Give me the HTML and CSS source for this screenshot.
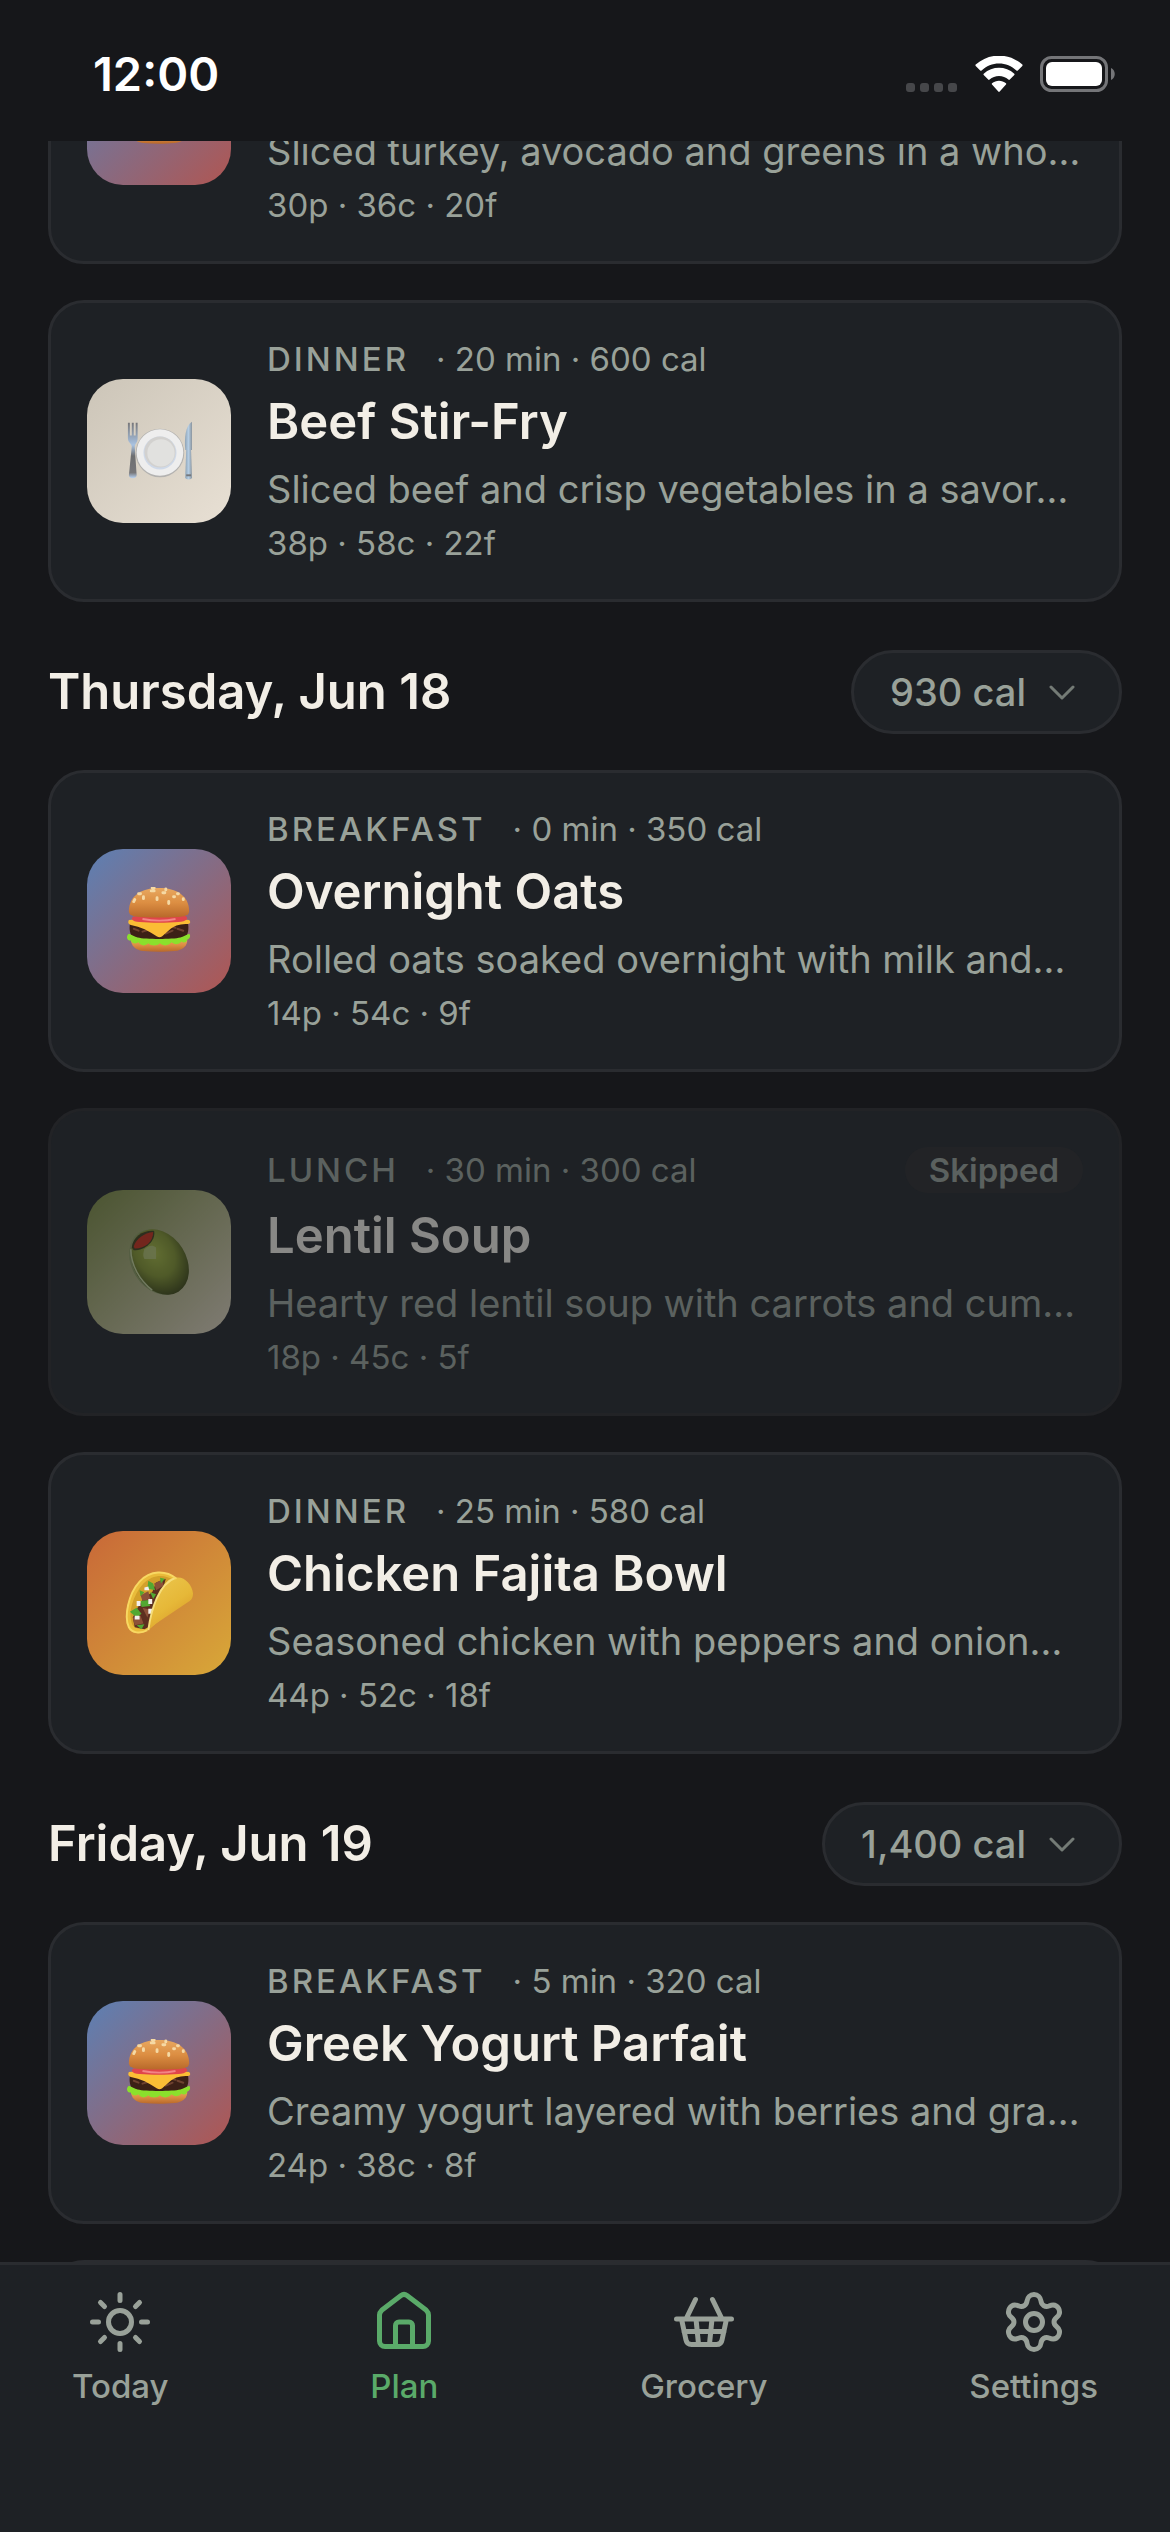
FILE: index.html
```html
<!DOCTYPE html>
<html lang="en">
<head>
  <meta charset="UTF-8">
  <meta name="viewport" content="width=device-width, initial-scale=1.0">
  <title>Meal Plan</title>
  <link rel="stylesheet" href="styles.css">
</head>
<body>
  <!-- shared food drawings -->
  <svg class="sprite" aria-hidden="true">
    <defs>
      <linearGradient id="bun" x1="0" y1="0" x2="0" y2="1">
        <stop offset="0" stop-color="#e8a860"/>
        <stop offset="0.5" stop-color="#dc8e42"/>
        <stop offset="1" stop-color="#b8682a"/>
      </linearGradient>
      <linearGradient id="metal" x1="0" y1="0" x2="0" y2="1">
        <stop offset="0" stop-color="#77777a"/>
        <stop offset="0.4" stop-color="#a9c3e2"/>
        <stop offset="0.6" stop-color="#6d6e70"/>
        <stop offset="0.9" stop-color="#77777a"/>
        <stop offset="1" stop-color="#b9d3f2"/>
      </linearGradient>
      <linearGradient id="blade" x1="0" y1="0" x2="1" y2="0">
        <stop offset="0" stop-color="#8ea3b5"/>
        <stop offset="0.5" stop-color="#b4cde4"/>
        <stop offset="1" stop-color="#8b949c"/>
      </linearGradient>
      <radialGradient id="oliveSkin" cx="0.5" cy="0.35" r="0.65">
        <stop offset="0" stop-color="#a5b83f"/>
        <stop offset="0.55" stop-color="#81932c"/>
        <stop offset="1" stop-color="#3c4612"/>
      </radialGradient>
      <linearGradient id="shell" x1="0" y1="0" x2="0.6" y2="1">
        <stop offset="0" stop-color="#ecc850"/>
        <stop offset="0.6" stop-color="#e6b838"/>
        <stop offset="1" stop-color="#d99a28"/>
      </linearGradient>
    </defs>
    <symbol id="burger" viewBox="0 0 70 70">
      <path d="M6 53h58c1 8-5 12-13 13-10 1-22 1-32 0C11 65 6 61 6 53z" fill="url(#bun)"/>
      <path d="M5 38h60c1 8-1 14-6 15-15 2-33 2-48 0-5-1-7-7-6-15z" fill="#3c2016"/>
      <path d="M9 43l5 2M18 46l6-2M42 48l7-3M54 43l6 2M48 41l4 1" stroke="#6f4230" stroke-width="2" stroke-linecap="round"/>
      <path d="M4 48c3 1 6 3 9 4 8 2 36 2 44 0 3-1 6-3 9-4 2 2 1 5-2 6 0 3-4 4-6 2-2 3-7 4-10 1-3 4-9 4-12 1-3 3-9 3-12 0-3 3-8 3-10-1-3 2-7 1-8-2-3 1-6-4-2-7z" fill="#8be02c"/>
      <path d="M4 34c14-2 46-3 62 0 2 2 1 4-1 4-7 0-13 1-18 5l-9 8c-2 1-3 1-5 0-8-6-17-10-27-12-3-1-3-3-2-5z" fill="#fbbd35"/>
      <path d="M7 33c0-3 3-3 6-3h45c4-1 6 0 6 3-2 2-5 3-9 3-12 1-28 1-40 0-4 0-7-1-8-3z" fill="#e0454b"/>
      <path d="M18 33c11 2 24 2 34 0" stroke="#f28486" stroke-width="2" fill="none"/>
      <path d="M4 25C4 9 17 1 35 1s31 8 31 24c0 3-2 4-5 5-15 2-37 2-52 0-3-1-5-2-5-5z" fill="url(#bun)"/>
      <g stroke="#f5d9a4" stroke-width="3" stroke-linecap="round">
        <path d="M10 13l-1 2M14 7h2M19 10v2M27 4h3M33 11v2M41 6h-2M45 15v2M42 2v1M50 10h1M54 7h1M60 12v1M28 1h2"/>
      </g>
    </symbol>
    <symbol id="plate" viewBox="0 0 70 70">
      <path d="M3 6v16c0 4 3 5 4 8L4 60c0 4 8 4 8 0l-2-30c1-3 3-4 3-8V6h-2v13H9V6H7v13H5V6z" fill="url(#metal)"/>
      <path d="M69 5v29h-7c-1-12 0-25 7-29z" fill="url(#blade)"/>
      <path d="M63 34h5l1 28c0 3-7 3-7 0z" fill="url(#blade)"/>
      <path d="M63 60h5" stroke="#74777b" stroke-width="2"/>
      <circle cx="36" cy="37" r="25" fill="#b3b2b0"/>
      <circle cx="36" cy="36.500" r="24" fill="#eeeeee"/>
      <circle cx="36" cy="37" r="17" fill="#cfd9e8"/>
      <circle cx="36" cy="36" r="16" fill="#d2d1cf"/>
      <circle cx="37" cy="37" r="14" fill="#e1e1df"/>
    </symbol>
    <symbol id="olive" viewBox="0 0 70 70">
      <ellipse cx="34" cy="35" rx="27" ry="36" transform="rotate(-32 34 35)" fill="#8a9a60"/>
      <ellipse cx="36" cy="35" rx="27" ry="36" transform="rotate(-32 36 35)" fill="url(#oliveSkin)"/>
      <path d="M6 22c0 16 9 32 22 42" stroke="#c3d29a" stroke-width="1.500" fill="none"/>
      <path d="M7 20C8 9 19 2 30 3c2 10-9 20-21 20z" fill="#3c3d18"/>
      <path d="M9 19c2-8 11-14 20-15 0 10-8 17-19 17z" fill="#c82c16"/>
      <path d="M20 22c4-4 8-5 12-2v12H20c-2-3-1-7 0-10z" fill="#b9c983" opacity="0.700"/>
    </symbol>
    <symbol id="taco" viewBox="0 0 70 70">
      <path d="M52 10C42 2 26 1 15 13 2 27-2 50 4 60c3 6 12 7 19 3L60 34z" fill="#e9bb3a"/>
      <path d="M49 11C40 5 28 6 19 15 8 27 3 45 7 56c2 5 9 7 15 4z" fill="#d3a02a"/>
      <path d="M42 10l-10 4-4 10-9 6-6 10-5 10 2 10 10 2 8-4 8-26z" fill="#5d2f20"/>
      <path d="M30 15l8-4 2 6-8 5zM16 27l8-4 2 8-8 2zM8 50l8-2 3 8-9 2zM18 40l8 2-3 8z" fill="#8c5138"/>
      <path d="M24 12l5 3 2 7-8-2zM15 22l5 2-4 4zM5 44l7-4 5 6-5 4zM16 33l8-1 2 6-9 1zM36 9l5 1-4 5zM12 58l8-1-3 5zM26 24l6 2-3 5z" fill="#52a832"/>
      <path d="M12 33h4v5h-4zM24 31h4v5h-4zM10 48h5v4h-5zM24 41h4v5h-4zM20 19l4-1 1 4h-5z" fill="#f2efec"/>
      <path d="M24 63C27 41 35 15 52 9c9-2 17 7 18 16 0 4-1 7-5 9L32 56z" fill="url(#shell)"/>
      <path d="M24 63C27 41 35 15 52 9" stroke="#f6de7c" stroke-width="2" fill="none"/>
      <path d="M53 10C42 1 26 1 15 13 3 26-1 50 4 60c3 6 12 7 19 3" stroke="#f8d862" stroke-width="2" fill="none"/>
    </symbol>
    <symbol id="chevron" viewBox="0 0 42 42">
      <path d="M10 16l11 11 11-11" fill="none" stroke="currentColor" stroke-width="3" stroke-linecap="round" stroke-linejoin="round"/>
    </symbol>
  </svg>

  <div class="app">
    <header class="status-bar">
      <time class="clock">12:00</time>
      <div class="status-icons">
        <svg width="52" height="10" viewBox="0 0 52 10" fill="#46474a" aria-label="No signal">
          <rect width="9" height="9" rx="3"/><rect x="14" width="9" height="9" rx="3"/><rect x="28" width="9" height="9" rx="3"/><rect x="42" width="9" height="9" rx="3"/>
        </svg>
        <svg width="50" height="37" viewBox="0 0 50 37" fill="#fff" aria-label="Wi-Fi">
          <path d="M25 7.500c6.500 0 12.700 2.500 17.400 7 .4.400 1 .4 1.400 0l4.500-4.500c.4-.4.4-1 0-1.400C35-3.400 15-3.400 1.700 8.600c-.4.400-.4 1 0 1.400l4.500 4.500c.4.400 1 .4 1.400 0C12.300 10 18.500 7.500 25 7.500z"/>
          <path d="M25 20c3.500 0 6.800 1.300 9.400 3.600.4.400 1 .4 1.400 0l4.500-4.500c.4-.4.4-1 0-1.400-8.700-7.900-21.900-7.900-30.600 0-.4.400-.4 1 0 1.400l4.500 4.500c.4.400 1 .4 1.400 0C18.200 21.300 21.500 20 25 20z"/>
          <path d="M32 28.600c.4-.4.4-1 0-1.400-4-3.400-10-3.400-14 0-.4.400-.4 1 0 1.400l6.300 7c.4.400 1 .4 1.400 0z"/>
        </svg>
        <svg width="76" height="37" viewBox="0 0 76 37" aria-label="Battery full">
          <rect x="1.500" y="1.500" width="65" height="33" rx="10" fill="none" stroke="#747578" stroke-width="3"/>
          <rect x="6" y="6" width="56" height="24" rx="6" fill="#fff"/>
          <path d="M71 12c5 2 5 10 0 12z" fill="#747578"/>
        </svg>
      </div>
    </header>

    <main class="plan">
      <div class="plan-list">
        <article class="meal-card">
          <div class="thumb thumb-burger"><svg><use href="#burger"/></svg></div>
          <div class="meal-info">
            <div class="meal-meta"><span class="meal-type">Lunch</span><span>· 10 min · 450 cal</span></div>
            <h3>Turkey Avocado Wrap</h3>
            <p class="description">Sliced turkey, avocado and greens in a who…</p>
            <p class="macros">30p · 36c · 20f</p>
          </div>
        </article>
        <article class="meal-card">
          <div class="thumb thumb-plate"><svg><use href="#plate"/></svg></div>
          <div class="meal-info">
            <div class="meal-meta"><span class="meal-type">Dinner</span><span>· 20 min · 600 cal</span></div>
            <h3>Beef Stir-Fry</h3>
            <p class="description">Sliced beef and crisp vegetables in a savor…</p>
            <p class="macros">38p · 58c · 22f</p>
          </div>
        </article>

        <div class="day-header">
          <h2>Thursday, Jun 18</h2>
          <button type="button" class="cal-button">930 cal <svg><use href="#chevron"/></svg></button>
        </div>
        <article class="meal-card">
          <div class="thumb thumb-burger"><svg><use href="#burger"/></svg></div>
          <div class="meal-info">
            <div class="meal-meta"><span class="meal-type">Breakfast</span><span>· 0 min · 350 cal</span></div>
            <h3>Overnight Oats</h3>
            <p class="description">Rolled oats soaked overnight with milk and…</p>
            <p class="macros">14p · 54c · 9f</p>
          </div>
        </article>
        <article class="meal-card skipped">
          <div class="thumb thumb-olive"><svg><use href="#olive"/></svg></div>
          <div class="meal-info">
            <div class="meal-meta"><span class="meal-type">Lunch</span><span>· 30 min · 300 cal</span><span class="badge">Skipped</span></div>
            <h3>Lentil Soup</h3>
            <p class="description">Hearty red lentil soup with carrots and cum…</p>
            <p class="macros">18p · 45c · 5f</p>
          </div>
        </article>
        <article class="meal-card">
          <div class="thumb thumb-taco"><svg><use href="#taco"/></svg></div>
          <div class="meal-info">
            <div class="meal-meta"><span class="meal-type">Dinner</span><span>· 25 min · 580 cal</span></div>
            <h3>Chicken Fajita Bowl</h3>
            <p class="description">Seasoned chicken with peppers and onion…</p>
            <p class="macros">44p · 52c · 18f</p>
          </div>
        </article>

        <div class="day-header">
          <h2>Friday, Jun 19</h2>
          <button type="button" class="cal-button">1,400 cal <svg><use href="#chevron"/></svg></button>
        </div>
        <article class="meal-card">
          <div class="thumb thumb-burger"><svg><use href="#burger"/></svg></div>
          <div class="meal-info">
            <div class="meal-meta"><span class="meal-type">Breakfast</span><span>· 5 min · 320 cal</span></div>
            <h3>Greek Yogurt Parfait</h3>
            <p class="description">Creamy yogurt layered with berries and gra…</p>
            <p class="macros">24p · 38c · 8f</p>
          </div>
        </article>
        <article class="meal-card">
          <div class="thumb thumb-taco"><svg><use href="#taco"/></svg></div>
        </article>
      </div>
    </main>

    <nav class="tab-bar">
      <a href="#today" class="tab">
        <svg viewBox="0 0 66 66"><circle cx="33" cy="33" r="11.500"/><path d="M33 5.500v6M33 54.500v6M5.500 33h6M54.500 33h6M13.500 13.500l4 4M48.500 48.500l4 4M13.500 52.500l4-4M48.500 17.500l4-4"/></svg>
        <span>Today</span>
      </a>
      <a href="#plan" class="tab active" aria-current="page">
        <svg viewBox="0 0 66 66"><path d="M8.500 26c0-2 1-3.500 2.500-5L30 6.500c2-1.500 4-1.500 6 0L55 21c1.500 1.500 2.500 3 2.500 5v26c0 3-2.500 5.500-5.500 5.500H14c-3 0-5.500-2.500-5.500-5.500z"/><path d="M24.500 57V36.500c0-2 1.500-3.500 3.500-3.500h10c2 0 3.500 1.500 3.500 3.500V57"/></svg>
        <span>Plan</span>
      </a>
      <a href="#grocery" class="tab">
        <svg viewBox="0 0 66 66"><path d="M5.500 30h55M24.500 10.500L15 30M41.500 10.500L51 30M10.500 30l4.500 21c.6 3 2.500 4.500 5.500 4.500h25c3 0 5-1.500 5.500-4.500l4.500-21M25 30l2.500 25M41 30l-2.500 25M13 42.500h40"/></svg>
        <span>Grocery</span>
      </a>
      <a href="#settings" class="tab">
        <svg viewBox="0 0 66 66"><circle cx="33" cy="33" r="8.500"/><path d="M33 5.500c4 0 6.500 3 7 6.500.5 4 4 6.500 8 5 4-1.800 7.500-1 9.500 2.300 2 3.500 1 7-2 9.300-3.300 2.500-3.300 6.300 0 8.800 3 2.300 4 5.800 2 9.300-2 3.300-5.500 4.100-9.500 2.300-4-1.500-7.500 1-8 5-.5 3.500-3 6.500-7 6.500s-6.500-3-7-6.500c-.5-4-4-6.500-8-5-4 1.800-7.500 1-9.500-2.300-2-3.500-1-7 2-9.300 3.300-2.500 3.300-6.300 0-8.800-3-2.300-4-5.800-2-9.300 2-3.300 5.500-4.100 9.500-2.300 4 1.500 7.500-1 8-5 .5-3.500 3-6.500 7-6.500z"/></svg>
        <span>Settings</span>
      </a>
    </nav>
  </div>
</body>
</html>
```

FILE: styles.css
```css
:root {
  --bg: #16171a;
  --surface: #1e2125;
  --border: #2a2c30;
  --border-muted: #222326;
  --text: #f2eee6;
  --muted: #99a199;
  --accent: #5aaa69;
}

* {
  box-sizing: border-box;
  margin: 0;
  padding: 0;
}

body {
  background-color: var(--bg);
  color: var(--text);
  font-family: Inter, "Liberation Sans", sans-serif;
}

.sprite {
  position: absolute;
  width: 0;
  height: 0;
}

.app {
  display: flex;
  flex-direction: column;
  height: 100vh;
}

.status-bar {
  display: flex;
  justify-content: space-between;
  align-items: flex-end;
  padding: 55px 54px 48px 93px;
  flex-shrink: 0;
}

.clock {
  font-size: 47px;
  font-weight: 600;
  line-height: 38px;
  color: #fff;
}

.status-icons {
  display: flex;
  align-items: flex-end;
  gap: 16px;
}

.plan {
  flex: 1;
  min-height: 0;
  overflow: hidden;
}

/* list starts scrolled part of the way down */
.plan-list {
  display: flex;
  flex-direction: column;
  gap: 36px;
  padding: 0 48px;
  margin-top: -179px;
}

.meal-card {
  display: flex;
  align-items: center;
  gap: 36px;
  padding: 36px;
  background-color: var(--surface);
  border: 3px solid var(--border);
  border-radius: 36px;
}

.thumb {
  display: flex;
  align-items: center;
  justify-content: center;
  width: 144px;
  height: 144px;
  border-radius: 36px;
  flex-shrink: 0;
}

.thumb svg {
  width: 68px;
  height: 68px;
}

.thumb-burger {
  background: linear-gradient(135deg, #5c80b4, #b05652);
}

.thumb-plate {
  background: linear-gradient(135deg, #ccc5b8, #e8e0d4);
}

.thumb-olive {
  background: linear-gradient(135deg, #78883c, #e0d5c0);
}

.thumb-taco {
  background: linear-gradient(135deg, #c86838, #d8a838);
}

.meal-info {
  display: flex;
  flex-direction: column;
  gap: 10px;
  flex: 1;
  min-width: 0;
}

.meal-meta {
  display: flex;
  align-items: center;
  gap: 27px;
  font-size: 33px;
  line-height: 40px;
  color: var(--muted);
}

.meal-type {
  font-weight: 500;
  letter-spacing: 3px;
  text-transform: uppercase;
}

.meal-info h3 {
  font-size: 49px;
  font-weight: 600;
  line-height: 66px;
}

.description {
  font-size: 38px;
  line-height: 48px;
  color: var(--muted);
  white-space: nowrap;
  overflow: hidden;
  text-overflow: ellipsis;
}

.macros {
  font-size: 33px;
  line-height: 40px;
  color: var(--muted);
}

.skipped {
  border-color: var(--border-muted);
}

.skipped .thumb,
.skipped .meal-info {
  opacity: 0.5;
}

.badge {
  margin-left: auto;
  padding: 0 24px;
  border-radius: 24px;
  background-color: #272628;
  font-weight: 600;
  line-height: 46px;
}

.day-header {
  display: flex;
  justify-content: space-between;
  align-items: center;
  margin-top: 12px;
}

.day-header h2 {
  font-size: 49px;
  font-weight: 600;
  line-height: 66px;
}

.cal-button {
  display: flex;
  align-items: center;
  gap: 15px;
  padding: 15px 36px;
  background-color: var(--surface);
  border: 3px solid var(--border);
  border-radius: 42px;
  color: var(--muted);
  font-family: inherit;
  font-size: 38px;
  font-weight: 500;
  line-height: 48px;
  cursor: pointer;
}

.cal-button svg {
  width: 42px;
  height: 42px;
  opacity: 0.7;
}

.tab-bar {
  display: flex;
  justify-content: space-between;
  padding: 24px 72px 125px;
  background-color: var(--surface);
  border-top: 3px solid var(--border);
  flex-shrink: 0;
}

.tab {
  display: flex;
  flex-direction: column;
  align-items: center;
  gap: 10px;
  color: var(--muted);
  font-size: 33px;
  font-weight: 500;
  line-height: 42px;
  text-decoration: none;
}

.tab svg {
  width: 66px;
  height: 66px;
  fill: none;
  stroke: currentColor;
  stroke-width: 5;
  stroke-linecap: round;
  stroke-linejoin: round;
}

.tab.active {
  color: var(--accent);
}
```
